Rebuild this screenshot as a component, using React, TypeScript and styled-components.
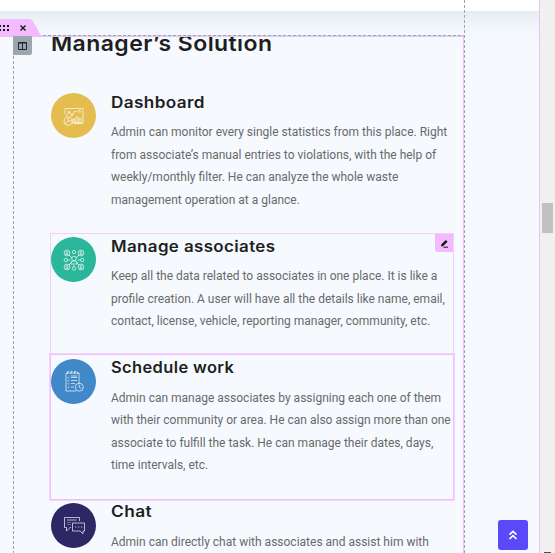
import React from "react";
import styled, { createGlobalStyle } from "styled-components";

const Global = createGlobalStyle`
  * { box-sizing: border-box; }
  html, body { margin: 0; overflow: hidden; background: #fff; }
`;

const Page = styled.div`
  position: relative;
  display: grid;
  grid-template-columns: 540px 15px;
  width: 555px;
  height: 553px;
  overflow: hidden;
`;

const Canvas = styled.main`
  display: grid;
  grid-template-rows: 11px 1fr;
  height: 553px;
  border-right: 1px solid #f2bdfb;
  overflow: hidden;
`;

const TopStrip = styled.div`
  background: #fff;
`;

const Section = styled.section`
  background: linear-gradient(to bottom, #e7ecf0 0, #eef3f8 11px, #f3f8fd 22px, #f6faff 34px);
  padding: 26px 0 0 13px;
  overflow: hidden;
`;

const Column = styled.div`
  display: flex;
  flex-direction: column;
  width: 451px;
  height: 530px;
  padding: 0 10px 0 38px;
  overflow: hidden;
`;

const Title = styled.h2`
  flex: none;
  margin: -9px 0 0;
  height: 62px;
  font: 600 22px/30px Inter, sans-serif;
  letter-spacing: 0.4px;
  color: #1d1f21;
  white-space: nowrap;
  transform: scaleX(1.045);
  transform-origin: left;
`;

const Item = styled.article<{ $height: number }>`
  flex: none;
  display: grid;
  grid-template-columns: 45px 1fr;
  column-gap: 15px;
  height: ${(p) => p.$height}px;
  padding-top: 3px;
`;

const IconDisc = styled.div<{ $color: string }>`
  display: flex;
  align-items: center;
  justify-content: center;
  width: 45px;
  height: 45px;
  border-radius: 50%;
  background: ${(p) => p.$color};
`;

const Glyph = styled.svg`
  width: 22px;
  height: 22px;
  overflow: visible;
  fill: none;
  stroke: #fff;
  stroke-opacity: 0.75;
  stroke-width: 0.9;
`;

const ItemTitle = styled.h3<{ $stretch: number }>`
  margin: -0.3px 0 8.55px;
  font: 600 15.6px/20px Inter, sans-serif;
  letter-spacing: 0.35px;
  color: #1d1f21;
  white-space: nowrap;
  transform: scaleX(${(p) => p.$stretch});
  transform-origin: left;
`;

const Copy = styled.p`
  margin: 0;
  font: 400 12px/22.5px Roboto, sans-serif;
  color: #696969;
  white-space: pre;
`;

const ScrollTrack = styled.aside`
  display: flex;
  flex-direction: column;
  align-items: center;
  justify-content: space-between;
  padding-top: 203px;
  background: #f0f0f0;
`;

const Thumb = styled.div`
  width: 11px;
  height: 30px;
  background: #c1c1c1;
`;

const ScrollArrow = styled.div`
  width: 7px;
  height: 1px;
  background: #505050;
`;

const DashedEdge = styled.div<{ $x: number; $y: number }>`
  position: absolute;
  left: ${(p) => p.$x}px;
  top: ${(p) => p.$y}px;
  bottom: 0;
  width: 1px;
  background: repeating-linear-gradient(to bottom, #9da5ae 0 3px, transparent 3px 5px);
`;

const DashedTop = styled.div`
  position: absolute;
  left: 13px;
  top: 35px;
  width: 452px;
  height: 1px;
  background: repeating-linear-gradient(to right, #9da5ae 0 3px, #e3dcec 3px 5px);
`;

const SectionOutline = styled.div`
  position: absolute;
  left: -2px;
  top: 36px;
  width: 466px;
  height: 530px;
  border: 1px solid #f2bdfb;
`;

const Outline = styled.div<{ $top: number; $height: number; $strong?: boolean }>`
  position: absolute;
  left: 50px;
  top: ${(p) => p.$top}px;
  width: 404px;
  height: ${(p) => p.$height}px;
  border: 1px solid ${(p) => (p.$strong ? "#f2bdfb" : "#f3cdfb")};
  box-shadow: ${(p) => (p.$strong ? "0 0 0 1px #f5d3fc" : "none")};
`;

const SectionTab = styled.div`
  position: absolute;
  left: 0;
  top: 19px;
  width: 41px;
  height: 17px;
  svg { display: block; }
`;

const ColumnHandle = styled.div`
  position: absolute;
  left: 13px;
  top: 36px;
  width: 19px;
  height: 19px;
  display: flex;
  align-items: center;
  justify-content: center;
  background: #9da5ae;
  border-radius: 0 0 2px 0;
`;

const EditHandle = styled.div`
  position: absolute;
  left: 435px;
  top: 234px;
  width: 18px;
  height: 18px;
  display: flex;
  align-items: center;
  justify-content: center;
  background: #f3bafd;
  border-radius: 0 0 0 2px;
`;

const BackToTop = styled.button`
  position: absolute;
  left: 498px;
  top: 520px;
  width: 30px;
  height: 30px;
  display: flex;
  align-items: center;
  justify-content: center;
  padding: 0;
  border: 0;
  border-radius: 3px;
  background: #5b49f9;
`;

const DashboardIcon = () => (
  <Glyph viewBox="0 0 22 22">
    <path d="M2 9V3.5h18v15h-9M3 11l3-4 3 3 3-4 2 1" />
    <path d="M15 5.5h3M15 7h3M10 18v-4h2v4M13 18v-6h2v6M16 18v-4.5h2V18M9 18h10" />
    <circle cx="5.2" cy="16" r="4.1" />
    <path d="M5.2 12v4h4M5.2 16l-3 3" />
    <circle cx="6" cy="7" r=".8" />
    <circle cx="9" cy="10" r=".8" />
  </Glyph>
);

const NODES = [[4, 4], [18, 4], [4, 18], [18, 18]];
const SMALL_NODES = [[11, 3], [2.8, 11], [19.2, 11], [11, 19.5]];

const AssociatesIcon = () => (
  <Glyph viewBox="0 0 22 22">
    {NODES.map(([x, y]) => (
      <g key={`${x}-${y}`}>
        <circle cx={x} cy={y} r="2.9" />
        <circle cx={x} cy={y - 0.5} r="1" />
        <path d={`M${x - 1.6} ${y + 2}q1.6-1.8 3.2 0`} />
      </g>
    ))}
    {SMALL_NODES.map(([x, y]) => (
      <circle key={`${x}-${y}`} cx={x} cy={y} r="1.7" />
    ))}
    <path d="M6 6l3 3M16 6l-3 3M6 16l3-3M16 16l-3-3M4.5 11h3M14.5 11h3M11 16v2" />
    <circle cx="11" cy="9.5" r="2.3" />
    <path d="M7.5 15q0-3.2 3.5-3.2T14.5 15z" />
  </Glyph>
);

const ScheduleIcon = () => (
  <Glyph viewBox="0 0 22 22">
    <path d="M13 21H3V3h13v11" />
    <path d="M4.5 4V1.5q1-1 1.5.5M8 4V1.5q1-1 1.5.5M11.5 4V1.5q1-1 1.5.5M14.6 4V2" />
    <path d="M4.5 7.5l.7.7L6.4 7M8 7.5h6M4.5 10.5l.7.7 1.2-1.2M8 10.5h6M4.5 13.5l.7.7L6.4 13M8 13.5h4M4.5 17l.7.7 1.2-1.2M8 17h3M8 6h6" />
    <circle cx="16.3" cy="17.2" r="4" />
    <path d="M16.3 14.6v2.8l2 1" />
  </Glyph>
);

const ChatIcon = () => (
  <Glyph viewBox="0 0 22 22">
    <path d="M16.5 7V3.5h-15v10h2V17l3.5-3.5h1M4 6h9.5" />
    <path d="M9.500 9h12v8h-1.500v2.800L17 17H9.500z" />
    <path d="M4 8.500h4M4 10.500h4" strokeOpacity=".35" />
    <path d="M12 13h1.300M15 13h1.300M18 13h1.300" />
  </Glyph>
);

const ITEMS = [
  {
    title: "Dashboard", color: "#e4bc50", height: 144, stretch: 1.1, Icon: DashboardIcon,
    copy: "Admin can monitor every single statistics from this place. Right\nfrom associate’s manual entries to violations, with the help of\nweekly/monthly filter. He can analyze the whole waste\nmanagement operation at a glance.",
  },
  {
    title: "Manage associates", color: "#2ab698", height: 121.5, stretch: 1.085, Icon: AssociatesIcon,
    copy: "Keep all the data related to associates in one place. It is like a\nprofile creation. A user will have all the details like name, email,\ncontact, license, vehicle, reporting manager, community, etc.",
  },
  {
    title: "Schedule work", color: "#4088c7", height: 144, stretch: 1.056, Icon: ScheduleIcon,
    copy: "Admin can manage associates by assigning each one of them\nwith their community or area. He can also assign more than one\nassociate to fulfill the task. He can manage their dates, days,\ntime intervals, etc.",
  },
  {
    title: "Chat", color: "#2d2765", height: 144, stretch: 1.11, Icon: ChatIcon,
    copy: "Admin can directly chat with associates and assist him with",
  },
];

export default function App() {
  return (
    <>
      <Global />
      <Page>
        <Canvas>
          <TopStrip />
          <Section>
            <Column>
              <Title>Manager’s Solution</Title>
              {ITEMS.map(({ title, color, height, stretch, Icon, copy }) => (
                <Item key={title} $height={height}>
                  <IconDisc $color={color}><Icon /></IconDisc>
                  <div>
                    <ItemTitle $stretch={stretch}>{title}</ItemTitle>
                    <Copy>{copy}</Copy>
                  </div>
                </Item>
              ))}
            </Column>
          </Section>
        </Canvas>
        <ScrollTrack>
          <Thumb />
          <ScrollArrow />
        </ScrollTrack>

        <SectionOutline />
        <DashedTop />
        <DashedEdge $x={13} $y={36} />
        <DashedEdge $x={464} $y={0} />
        <Outline $top={233} $height={122} />
        <Outline $top={354} $height={146} $strong />
        <SectionTab>
          <svg width="41" height="17" viewBox="0 0 41 17">
            <path d="M0 0h29q3 0 4.300 2.500L41 17H0z" fill="#f3bafd" />
            <path d="M0 6h1v2H0zM3 6h2v2H3zM7 6h2v2H7zM0 10h1v2H0zM3 10h2v2H3zM7 10h2v2H7z" fill="#17131a" />
            <path d="M20.500 6.500l5 5M25.500 6.500l-5 5" stroke="#17131a" strokeWidth="1.300" />
          </svg>
        </SectionTab>
        <ColumnHandle>
          <svg width="9" height="8" viewBox="0 0 9 8">
            <path d="M.5.5h8v7h-8zM4.500.5v7M.5 1h8" fill="none" stroke="#22262a" />
          </svg>
        </ColumnHandle>
        <EditHandle>
          <svg width="9" height="9" viewBox="0 0 9 9">
            <path d="M1 7.500l.5-2.200L5.800 1l1.800 1.700-4.400 4.200z" fill="#17131a" />
            <path d="M3.500 8.200H8" stroke="#17131a" strokeWidth="1" />
          </svg>
        </EditHandle>
        <BackToTop aria-label="Back to top">
          <svg width="10" height="10" viewBox="0 0 10 10">
            <path d="M1.500 4.700L5 1.400l3.500 3.300M1.500 9L5 5.700 8.500 9" fill="none" stroke="#fff" strokeWidth="1.700" />
          </svg>
        </BackToTop>
      </Page>
    </>
  );
}
